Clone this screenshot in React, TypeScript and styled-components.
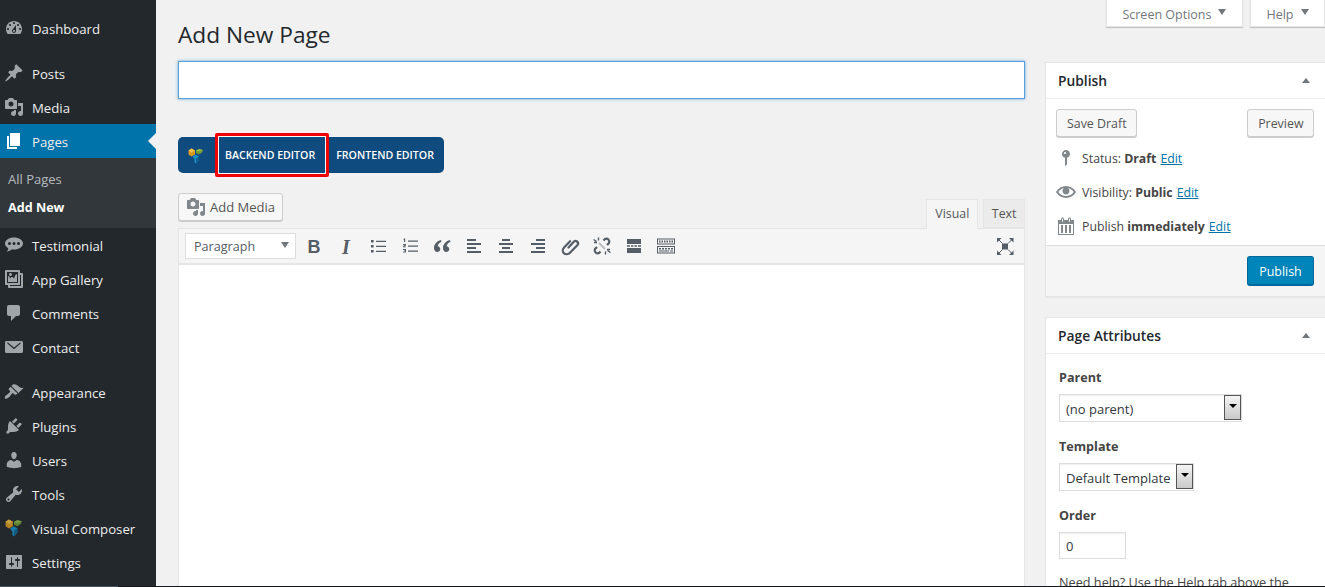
import React from "react";
import styled, { createGlobalStyle } from "styled-components";

const Global = createGlobalStyle`
  html, body { margin: 0; padding: 0; height: 100%; overflow: hidden; background: #f1f1f1; }
  body { font-family: "Open Sans", "Liberation Sans", sans-serif; font-size: 13px; color: #444; }
  * { box-sizing: border-box; }
`;

const P = {
  dashboard: "M3.76 16h12.48c1.1-1.37 1.76-3.11 1.76-5 0-4.42-3.58-8-8-8s-8 3.58-8 8c0 1.89.66 3.63 1.76 5zM10 4c.55 0 1 .45 1 1s-.45 1-1 1-1-.45-1-1 .45-1 1-1zM6 6c.55 0 1 .45 1 1s-.45 1-1 1-1-.45-1-1 .45-1 1-1zm8 0c.55 0 1 .45 1 1s-.45 1-1 1-1-.45-1-1 .45-1 1-1zm-5.37 5.55L12 7v6c0 1.1-.9 2-2 2s-2-.9-2-2c0-.57.24-1.08.63-1.45zM4 10c.55 0 1 .45 1 1s-.45 1-1 1-1-.45-1-1 .45-1 1-1zm12 0c.55 0 1 .45 1 1s-.45 1-1 1-1-.45-1-1 .45-1 1-1zm-5 3c0-.55-.45-1-1-1s-1 .45-1 1 .45 1 1 1 1-.45 1-1z",
  post: "M10.44 3.02l1.82-1.82 6.36 6.35-1.83 1.82c-1.05-.68-2.48-.57-3.41.36l-.75.75c-.92.93-1.04 2.35-.35 3.41l-1.83 1.82-2.41-2.41-2.8 2.79c-.42.42-3.38 2.71-3.8 2.29s1.86-3.39 2.28-3.81l2.79-2.79L4.1 9.36l1.83-1.82c1.05.69 2.48.57 3.4-.36l.75-.75c.93-.92 1.05-2.35.36-3.41z",
  media: "M13 11V4c0-.55-.45-1-1-1h-1.67L9 1H5L3.67 3H2c-.55 0-1 .45-1 1v7c0 .55.45 1 1 1h10c.55 0 1-.45 1-1zM7 4.5c1.38 0 2.5 1.12 2.5 2.5S8.38 9.5 7 9.5 4.5 8.38 4.5 7 5.62 4.5 7 4.5zM14 6h5v10.5c0 1.38-1.12 2.5-2.5 2.5S14 17.88 14 16.5s1.12-2.5 2.5-2.5c.17 0 .34.02.5.05V9h-3V6zm-4 8.05V13h2v3.5c0 1.38-1.12 2.5-2.5 2.5S7 17.88 7 16.5 8.12 14 9.5 14c.17 0 .34.02.5.05z",
  page: "M6 15V2h10v13H6zm-1 1h8v2H3V5h2v11z",
  testimonial: "M10 2.5c-5 0-9 2.7-9 6 0 1.9 1.3 3.6 3.4 4.7-.2 1.4-1 2.6-1.9 3.3 2.2-.1 4.2-1 5.5-2.2.6.1 1.3.2 2 .2 5 0 9-2.7 9-6s-4-6-9-6zM5.5 7a1.5 1.5 0 1 1 0 3 1.5 1.5 0 0 1 0-3zm4.5 0a1.5 1.5 0 1 1 0 3 1.5 1.5 0 0 1 0-3zm4.5 0a1.5 1.5 0 1 1 0 3 1.5 1.5 0 0 1 0-3z",
  gallery: "M16 4h1.96c.57 0 1.04.47 1.04 1.04v12.92c0 .57-.47 1.04-1.04 1.04H5.04C4.47 19 4 18.53 4 17.96V16H2.04C1.47 16 1 15.53 1 14.96V2.04C1 1.47 1.47 1 2.04 1h12.92c.57 0 1.04.47 1.04 1.04V4zM3 14h11V3H3v11zm5-8.5C8 4.67 7.33 4 6.5 4S5 4.67 5 5.5 5.67 7 6.5 7 8 6.33 8 5.5zm2 4.5s1-5 3-5v8H4V7c2 0 2 3 2 3s.33-2 2-2 2 2 2 2zm7 7V6h-1v8.96c0 .57-.47 1.04-1.04 1.04H6v1h11z",
  comments: "M5 2h9c1.1 0 2 .9 2 2v7c0 1.1-.9 2-2 2h-2l-5 5v-5H5c-1.1 0-2-.9-2-2V4c0-1.1.9-2 2-2z",
  email: "M2.5 4h15c.83 0 1.5.67 1.5 1.5v9c0 .83-.67 1.5-1.5 1.5h-15C1.67 16 1 15.33 1 14.5v-9C1 4.67 1.67 4 2.5 4zm1.7 1.7c-.5-.4-1.3.3-.8.9l6.600 5.700 6.600-5.700c.5-.6-.3-1.300-.8-.9l-5.800 4.700z",
  appearance: "M14.48 11.06L7.41 3.99l1.5-1.5c.5-.56 2.3-.47 3.51.32 1.21.8 1.43 1.28 2.91 2.1 1.18.64 2.45 1.26 4.45.85zm-.71.71L6.7 4.7 4.93 6.47c-.39.39-.39 1.02 0 1.41l1.06 1.06c.39.39.39 1.03 0 1.42-.6.6-1.43 1.11-2.21 1.69-.35.26-.7.53-1.01.84C1.43 13.23.18 15.6 1 16.43c.83.83 3.2-.42 4.52-1.77.3-.31.58-.66.84-1.01.58-.78 1.09-1.61 1.69-2.21.39-.39 1.02-.39 1.41 0l1.06 1.06c.39.39 1.02.39 1.41 0z",
  plugins: "M13.11 4.36L9.87 7.6 8 5.73l3.24-3.24c.35-.34 1.05-.2 1.56.32.52.51.66 1.21.31 1.55zm-8 1.77l.91-1.12 9.01 9.01-1.19.84c-.71.71-2.63 1.16-3.82 1.16H6.14L4.9 17.26c-.59.59-1.54.59-2.12 0-.59-.58-.59-1.53 0-2.12l1.24-1.24v-3.88c0-1.13.4-3.19 1.09-3.89zm7.26 3.97l3.24-3.24c.34-.35 1.04-.21 1.55.31.52.51.66 1.21.31 1.55l-3.24 3.25z",
  users: "M10 9.25c-2.27 0-2.73-3.44-2.73-3.44C7 4.02 7.82 2 9.97 2c2.16 0 2.98 2.02 2.71 3.81 0 0-.41 3.44-2.68 3.44zm0 2.57L12.72 10c2.39 0 4.52 2.33 4.52 4.53v2.49s-3.65 1.13-7.24 1.13c-3.65 0-7.24-1.13-7.24-1.13v-2.49c0-2.25 1.94-4.48 4.47-4.48z",
  tools: "M16.68 9.77c-1.34 1.34-3.3 1.67-4.95.99l-5.41 6.52c-.99.99-2.59.99-3.58 0s-.99-2.59 0-3.57l6.52-5.42c-.68-1.65-.35-3.61.99-4.95 1.28-1.28 3.12-1.62 4.72-1.06l-2.89 2.89 2.82 2.82 2.86-2.87c.53 1.58.18 3.39-1.08 4.65zM3.81 16.21c.4.39 1.04.39 1.43 0 .4-.4.4-1.04 0-1.43-.39-.4-1.03-.4-1.43 0-.39.39-.39 1.03 0 1.43z",
  settings: "M18 16V4c0-.55-.45-1-1-1H3c-.55 0-1 .45-1 1v12c0 .55.45 1 1 1h14c.55 0 1-.45 1-1zM8 11h1c.55 0 1 .45 1 1s-.45 1-1 1H8v1.5c0 .28-.22.5-.5.5s-.5-.22-.5-.5V13H6c-.55 0-1-.45-1-1s.45-1 1-1h1V5.5c0-.28.22-.5.5-.5s.5.22.5.5V11zm5-2h-1c-.55 0-1-.45-1-1s.45-1 1-1h1V5.5c0-.28.22-.5.5-.5s.5.22.5.5V7h1c.55 0 1 .45 1 1s-.45 1-1 1h-1v5.5c0 .28-.22.5-.5.5s-.5-.22-.5-.5V9z",
  status: "M14 6c0 1.86-1.28 3.41-3 3.86V16c0 1-2 2-2 2V9.86c-1.72-.45-3-2-3-3.86 0-2.21 1.79-4 4-4s4 1.79 4 4zM8 5c0 .55.45 1 1 1s1-.45 1-1-.45-1-1-1-1 .45-1 1z",
  eye: "M19.7 9.4C17.7 6 14 3.9 10 3.9S2.3 6 .3 9.4L0 10l.3.6c2 3.4 5.7 5.5 9.7 5.5s7.7-2.1 9.7-5.5l.3-.6-.3-.6zM10 14.1c-3.1 0-6-1.6-7.7-4.1C3.6 8 5.7 6.6 8 6.1c-.9.6-1.5 1.7-1.5 2.9 0 1.9 1.6 3.5 3.5 3.5s3.5-1.6 3.5-3.5c0-1.2-.6-2.3-1.5-2.9 2.3.5 4.4 1.9 5.7 3.9-1.7 2.5-4.6 4.1-7.7 4.1z",
  calendar: "M15 4h3v15H2V4h3V3c0-.41.15-.76.44-1.06.29-.29.65-.44 1.06-.44s.77.15 1.06.44c.29.3.44.65.44 1.06v1h4V3c0-.41.15-.76.44-1.06.29-.29.65-.44 1.06-.44s.77.15 1.06.44c.29.3.44.65.44 1.06v1zM6 3v2.5c0 .14.05.26.15.36.09.09.21.14.35.14s.26-.05.35-.14c.1-.1.15-.22.15-.36V3c0-.14-.05-.26-.15-.35-.09-.1-.21-.15-.35-.15s-.26.05-.35.15c-.1.09-.15.21-.15.35zm7 0v2.5c0 .14.05.26.14.36.1.09.22.14.36.14s.26-.05.36-.14c.09-.1.14-.22.14-.36V3c0-.14-.05-.26-.14-.35-.1-.1-.22-.15-.36-.15s-.26.05-.36.15c-.09.09-.14.21-.14.35zm4 15V8H3v10h14zM5 9h2v8H5V9zm4 0h2v8H9V9zm4 0h2v8h-2V9z",
};

const Glyph = ({ d, size = 20 }: { d: string; size?: number }) => (
  <svg width={size} height={size} viewBox="0 0 20 20" fill="currentColor" fillRule="evenodd" aria-hidden>
    <path d={d} />
  </svg>
);

const VcLogo = ({ size = 16 }: { size?: number }) => (
  <svg width={size} height={size} viewBox="0 0 16 16" aria-hidden>
    <polygon points="0.500,2.500 3.500,0.500 7,2.500 7,6.500 3.500,8.500 0.500,6.500" fill="#d99a22" />
    <polygon points="0.500,2.500 3.500,0.500 7,2.500 3.500,4.500" fill="#eec04a" />
    <polygon points="8,2.500 11,1 15,2 14,4.500 11,6.500 8,5" fill="#6f9a35" />
    <polygon points="8,2.500 11,1 15,2 11,3.500" fill="#93bb4c" />
    <polygon points="4.500,8.500 8,6.500 11,8.500 11,12 8,15.500 6.500,14 6.500,11" fill="#1a8fc6" />
    <polygon points="8,10.500 11,8.500 11,12 8,15.500" fill="#12628f" />
  </svg>
);

const Page = styled.div`
  width: 1325px;
  height: 587px;
  display: flex;
  flex-direction: column;
  overflow: hidden;
`;
const Body = styled.div`
  flex: 1;
  min-height: 0;
  display: flex;
  overflow: hidden;
`;
const BottomLine = styled.div`
  height: 1px;
  background: linear-gradient(to right, #44545e 118px, #14181c 118px);
  flex: none;
`;

const Sidebar = styled.nav`
  width: 156px;
  flex: none;
  background: #23282d;
  padding-top: 11px;
  display: flex;
  flex-direction: column;
`;
const MenuItem = styled.div<{ $current?: boolean; $gap?: number }>`
  height: 34px;
  flex: none;
  display: flex;
  align-items: center;
  gap: 8px;
  padding: 2px 0 0 4px;
  position: relative;
  margin-top: ${(p) => p.$gap ?? 0}px;
  color: #eee;
  font-size: 13.2px;
  background: ${(p) => (p.$current ? "#0073aa" : "transparent")};
  & > svg { flex: none; color: ${(p) => (p.$current ? "#fff" : "#a0a5aa")}; margin-top: -2px; }
`;
const SideLogo = styled.span`
  width: 20px;
  height: 18px;
  flex: none;
  margin-top: -3px;
  display: flex;
  justify-content: center;
  opacity: 0.8;
`;
const CurrentArrow = styled.span`
  position: absolute;
  right: 0;
  top: 9px;
  border: 8px solid transparent;
  border-right-color: #f1f1f1;
  border-left-width: 0;
`;
const Submenu = styled.div`
  background: #32373c;
  height: 70px;
  padding: 7px 0;
  flex: none;
`;
const SubItem = styled.div<{ $active?: boolean }>`
  height: 28px;
  line-height: ${(p) => (p.$active ? 30 : 28)}px;
  padding-left: 8px;
  font-size: ${(p) => (p.$active ? 12.6 : 13)}px;
  font-weight: ${(p) => (p.$active ? 700 : 400)};
  color: ${(p) => (p.$active ? "#fff" : "rgba(240,245,250,.7)")};
`;

const Main = styled.main`
  flex: 1;
  min-width: 0;
  padding-left: 22px;
  display: flex;
  flex-direction: column;
  overflow: hidden;
`;
const TopBar = styled.div`
  height: 61px;
  flex: none;
  display: flex;
  justify-content: space-between;
  align-items: flex-start;
`;
const Title = styled.h1`
  margin: 0;
  padding-top: 19px;
  font-size: 22.7px;
  line-height: 32px;
  font-weight: 400;
  color: #23282d;
`;
const MetaLinks = styled.div`
  display: flex;
  gap: 7px;
`;
const MetaTab = styled.div`
  height: 27px;
  display: flex;
  align-items: center;
  gap: 7px;
  padding: 2px 15.500px 0;
  background: #fff;
  font-size: 12.5px;
  color: #72777c;
  box-shadow: 0 1px 1px rgba(0, 0, 0, 0.18);
  border: 1px solid #e5e5e5;
  border-top: 0;
`;
const Caret = styled.span<{ $up?: boolean }>`
  width: 0;
  height: 0;
  ${(p) =>
    p.$up
      ? "border-left: 4px solid transparent; border-right: 4px solid transparent; border-bottom: 5px solid #72777c;"
      : "border-left: 4.5px solid transparent; border-right: 4.5px solid transparent; border-top: 6px solid #72777c; margin-top: -2px;"}
`;
const MetaCaret = styled(Caret)`
  margin-top: -4px;
`;
const Columns = styled.div`
  flex: 1;
  min-height: 0;
  display: flex;
  gap: 20px;
`;
const EditorCol = styled.div`
  width: 847px;
  flex: none;
  display: flex;
  flex-direction: column;
`;
const TitleInput = styled.div`
  height: 38px;
  background: #fff;
  border: 1px solid #5b9dd9;
  box-shadow: 0 0 3px rgba(60, 150, 225, 0.8);
  flex: none;
`;
const ComposerBar = styled.div`
  margin-top: 38px;
  width: 266px;
  height: 36px;
  flex: none;
  background: #0f4b7e;
  border-radius: 5px;
  display: flex;
  align-items: center;
  position: relative;
  color: #fff;
  font-size: 10.6px;
  font-weight: 600;
  svg { margin: 1px 0 0 10px; flex: none; }
`;
const ComposerLabel = styled.span<{ $left: number }>`
  margin-left: ${(p) => p.$left}px;
  white-space: nowrap;
`;
const RedFrame = styled.span`
  position: absolute;
  left: 37px;
  top: -4px;
  width: 114px;
  height: 44px;
  border: 3px solid #f00000;
  border-radius: 2px;
  box-shadow: inset 0 0 0 1px #fff;
`;
const EditorHead = styled.div`
  margin-top: 20px;
  height: 35px;
  flex: none;
  display: flex;
  justify-content: space-between;
  align-items: flex-start;
`;
const Button = styled.div`
  height: 28px;
  background: #f7f7f7;
  border: 1px solid #ccc;
  border-radius: 3px;
  box-shadow: 0 1px 0 #ccc;
  color: #555;
  display: inline-flex;
  align-items: center;
  font-size: 13px;
  white-space: nowrap;
`;
const AddMedia = styled(Button)`
  width: 105px;
  padding-left: 7px;
  gap: 4px;
  svg { color: #82878c; }
`;
const Tabs = styled.div`
  display: flex;
  gap: 5px;
  align-self: flex-end;
`;
const Tab = styled.div<{ $active?: boolean }>`
  height: ${(p) => (p.$active ? 30 : 29)}px;
  margin-bottom: ${(p) => (p.$active ? -1 : 0)}px;
  position: relative;
  padding: 0 ${(p) => (p.$active ? 8 : 7.5)}px ${(p) => (p.$active ? 2 : 1)}px;
  display: flex;
  align-items: center;
  font-size: 12.4px;
  color: #555;
  background: ${(p) => (p.$active ? "#f5f5f5" : "#ebebeb")};
  border: 1px solid #e5e5e5;
  border-bottom: ${(p) => (p.$active ? "0" : "1px solid #e5e5e5")};
`;
const Toolbar = styled.div`
  height: 37px;
  flex: none;
  background: #f5f5f5;
  border: 1px solid #e5e5e5;
  border-bottom: 2px solid #e5e5e5;
  display: flex;
  align-items: center;
  padding-left: 6px;
  color: #50575e;
`;
const FormatSelect = styled.div`
  width: 111px;
  height: 26px;
  background: #fff;
  border: 1px solid #ddd;
  display: flex;
  align-items: center;
  justify-content: space-between;
  padding: 0 6px 0 8px;
  margin-right: 2px;
  font-size: 12.6px;
  color: #555d66;
`;
const ToolBtn = styled.div`
  width: 32px;
  height: 26px;
  flex: none;
  display: flex;
  align-items: center;
  justify-content: center;
  color: #555d66;
`;
const BoldMark = styled.b`
  font-family: "Liberation Sans", sans-serif;
  font-size: 18px;
  line-height: 26px;
  font-weight: 700;
  padding-top: 1px;
`;
const ItalicMark = styled.i`
  font-family: "Liberation Serif", serif;
  font-size: 20px;
  line-height: 26px;
  font-weight: 700;
  font-style: italic;
  padding-top: 1px;
`;
const FullscreenBtn = styled(ToolBtn)`
  margin-left: auto;
  margin-right: 3px;
`;
const EditorArea = styled.div`
  flex: 1;
  background: #fff;
  border-left: 1px solid #e5e5e5;
  border-right: 1px solid #e5e5e5;
`;

const SideCol = styled.aside`
  width: 280px;
  flex: none;
  padding-top: 1px;
  display: flex;
  flex-direction: column;
  gap: 20px;
`;
const Box = styled.section`
  background: #fff;
  border: 1px solid #e5e5e5;
  border-right: 0;
  box-shadow: 0 1px 1px rgba(0, 0, 0, 0.04);
`;
const BoxHead = styled.div`
  height: 36px;
  display: flex;
  align-items: center;
  justify-content: space-between;
  padding: 0 15px 0 12px;
  border-bottom: 1px solid #eee;
  font-size: 13.8px;
  font-weight: 600;
  color: #23282d;
`;
const PublishActions = styled.div`
  display: flex;
  justify-content: space-between;
  padding: 10px 11px 0 10px;
`;
const GhostButton = styled(Button)`
  padding: 0 9.500px 0 10px;
  font-size: 12.4px;
`;
const InfoRows = styled.div`
  padding-top: 4px;
  display: flex;
  flex-direction: column;
`;
const InfoRow = styled.div`
  height: 34px;
  display: flex;
  align-items: center;
  padding-left: 10px;
  color: #444;
  font-size: 12.3px;
  white-space: pre;
  svg { color: #82878c; flex: none; margin-right: 6px; }
  b { font-weight: 700; }
`;
const EditLink = styled.a`
  color: #0073aa;
  text-decoration: underline;
  margin-left: 4px;
`;
const BoxFoot = styled.div`
  margin-top: 2px;
  height: 51px;
  background: #f5f5f5;
  border-top: 1px solid #ddd;
  display: flex;
  align-items: flex-start;
  justify-content: flex-end;
  padding: 10px 11px 0 0;
`;
const PrimaryButton = styled.div`
  width: 67px;
  height: 30px;
  padding-top: 1px;
  background: #0085ba;
  border: 1px solid #006799;
  border-bottom-width: 2px;
  border-radius: 3px;
  color: #fff;
  font-size: 12.4px;
  display: flex;
  align-items: center;
  justify-content: center;
`;
const AttrBody = styled.div`
  padding: 13px 13px 0;
  height: 240px;
  overflow: hidden;
`;
const FieldLabel = styled.div`
  font-size: 12.6px;
  font-weight: 700;
  height: 20px;
  line-height: 22px;
  color: #444;
`;
const NativeSelect = styled.div<{ $w: number }>`
  width: ${(p) => p.$w}px;
  height: 28px;
  margin: 7px 0 14px;
  background: #fff;
  border: 1px solid #ddd;
  box-shadow: inset 0 1px 2px rgba(0, 0, 0, 0.07);
  display: flex;
  align-items: stretch;
  justify-content: space-between;
  font-size: 13px;
  color: #32373c;
  padding-left: 6px;
  line-height: 29px;
  white-space: nowrap;
`;
const SelectArrow = styled.span`
  width: 17px;
  margin: 0 0 1px 0;
  border: 1px solid #555;
  background: linear-gradient(#f4f4f4, #c9c9c9);
  display: flex;
  align-items: center;
  justify-content: center;
  &::after {
    content: "";
    border-left: 4px solid transparent;
    border-right: 4px solid transparent;
    border-top: 4px solid #000;
    margin-top: -4px;
  }
`;
const OrderInput = styled.div`
  width: 67px;
  height: 27px;
  margin: 7px 0 0;
  background: #fff;
  border: 1px solid #ddd;
  box-shadow: inset 0 1px 2px rgba(0, 0, 0, 0.07);
  padding-left: 6px;
  line-height: 26px;
  font-size: 13px;
  color: #32373c;
`;
const HelpNote = styled.p`
  margin: 14px 0 0;
  font-size: 12.7px;
  line-height: 19px;
  white-space: nowrap;
  color: #444;
`;

const bar = (y: number, x1: number, x2: number) => `M${x1} ${y}h${x2 - x1}v2H${x1}z`;
const ICONS: Record<string, string> = {
  bullist: "M3 4h2.600v2.600H3zM3 9h2.600v2.600H3zM3 14h2.600v2.600H3zM8 4.800h10v1.200H8zM8 9.800h10v1.200H8zM8 14.800h10v1.200H8z",
  numlist: "M4 2.500h1.200v3.600H4V3.500H3zM8 4.500h10v1.200H8zM8 9.500h10v1.200H8zM8 14.500h10v1.200H8zM3 8h3v1.200L4.400 10.400H6v.9H3v-1l1.600-1.300H3zM3 13h3v3.600H3v-.9h2v-.5H3.800v-.7H5v-.5H3z",
  quote: "M9 4C5 5 2 8 2 12c0 2.200 1.300 4 3.300 4 1.700 0 3-1.200 3-2.900 0-1.600-1.100-2.800-2.700-2.900C6 8.300 7.500 6.700 9.500 5.800zM18 4c-4 1-7 4-7 8 0 2.200 1.300 4 3.300 4 1.700 0 3-1.200 3-2.900 0-1.600-1.100-2.800-2.700-2.900.4-1.900 1.900-3.500 3.900-4.400z",
  alignleft: bar(3, 3, 12) + bar(7, 3, 17) + bar(11, 3, 12) + bar(15, 3, 17),
  aligncenter: bar(3, 6, 14) + bar(7, 3, 17) + bar(11, 6, 14) + bar(15, 3, 17),
  alignright: bar(3, 8, 17) + bar(7, 3, 17) + bar(11, 8, 17) + bar(15, 3, 17),
  hr: "M3 3h14v5H3zM3 9.300h3v1.400H3zM7 9.300h2.500v1.400H7zM10.500 9.300H13v1.400h-2.500zM14 9.300h3v1.400h-3zM3 12h14v5H3z",
  kitchen: "M1 2.500h18v6H1zM2 3.500v4h16v-4zM3 4.500h1.500V6.500H3zM5.500 4.500H7V6.500H5.500zM8 4.500h1.500V6.500H8zM10.500 4.500H12V6.500h-1.500zM13 4.500h1.500V6.500H13zM15.500 4.500H17V6.500h-1.500zM1 10h18v7.500H1zM2 11v5.500h16V11zM3 12h2v1.500H3zM6 12h2v1.500H6zM9 12h2v1.500H9zM12 12h2v1.500h-2zM15 12h2v1.500h-2zM3 14.500h10V15.500H3zM14 14.500h3V15.500h-3z",
};

const LinkIcon = () => (
  <svg width="20" height="20" viewBox="0 0 20 20" fill="none" stroke="currentColor" strokeWidth="2.200" aria-hidden>
    <path d="M8.500 11.500l5-5.500a2.500 2.500 0 0 1 4 3l-7.500 7.700c-1.700 1.700-4.500 2-6.200.4-1.500-1.500-1.300-4 .3-5.700l6-6.200" strokeLinecap="round" />
  </svg>
);
const UnlinkIcon = () => (
  <svg width="20" height="20" viewBox="0 0 20 20" fill="none" stroke="currentColor" strokeWidth="2.200" aria-hidden>
    <path d="M11.500 4.500l1.500-1.500a3 3 0 0 1 4 4l-2 2M8.500 15.500L7 17a3 3 0 0 1-4-4l2-2" />
    <path d="M2 6.500h3M6.500 1.500v3M1.500 3.500l3 2M18 13.500h-3M13.500 18.500v-3M18.500 16.500l-3-2" strokeWidth="1.400" />
    <path d="M7 7l6 6" stroke="#b9bcc0" strokeWidth="1.800" />
  </svg>
);
const FullscreenIcon = () => (
  <svg width="20" height="20" viewBox="0 0 20 20" fill="currentColor" stroke="none" aria-hidden>
    <rect x="7" y="7.500" width="6" height="6" />
    <path d="M2 2h4.500L2 6.500zM18.500 2v4.500L14 2zM2 19v-4.500L6.500 19zM18.500 19H14l4.500-4.500z" />
    <path d="M4 4l3.500 3.500M16.500 4L13 7.500M4 17l3.500-3.500M16.500 17L13 13.500" stroke="currentColor" strokeWidth="1" />
  </svg>
);

const menuTop = [
  { name: "Testimonial", d: P.testimonial },
  { name: "App Gallery", d: P.gallery },
  { name: "Comments", d: P.comments },
  { name: "Contact", d: P.email },
];
const menuBottom = [
  { name: "Appearance", d: P.appearance, gap: 11 },
  { name: "Plugins", d: P.plugins },
  { name: "Users", d: P.users },
  { name: "Tools", d: P.tools },
  { name: "Visual Composer", vc: true },
  { name: "Settings", d: P.settings },
];

export default function App() {
  return (
    <Page>
      <Global />
      <Body>
        <Sidebar>
          <MenuItem><Glyph d={P.dashboard} />Dashboard</MenuItem>
          <MenuItem $gap={11}><Glyph d={P.post} />Posts</MenuItem>
          <MenuItem><Glyph d={P.media} />Media</MenuItem>
          <MenuItem $current><Glyph d={P.page} />Pages<CurrentArrow /></MenuItem>
          <Submenu>
            <SubItem>All Pages</SubItem>
            <SubItem $active>Add New</SubItem>
          </Submenu>
          {menuTop.map((m) => (
            <MenuItem key={m.name}><Glyph d={m.d} />{m.name}</MenuItem>
          ))}
          {menuBottom.map((m) => (
            <MenuItem key={m.name} $gap={m.gap}>
              {m.vc ? <SideLogo><VcLogo size={18} /></SideLogo> : <Glyph d={m.d as string} />}
              {m.name}
            </MenuItem>
          ))}
        </Sidebar>
        <Main>
          <TopBar>
            <Title>Add New Page</Title>
            <MetaLinks>
              <MetaTab>Screen Options<MetaCaret /></MetaTab>
              <MetaTab>Help<MetaCaret /></MetaTab>
            </MetaLinks>
          </TopBar>
          <Columns>
            <EditorCol>
              <TitleInput />
              <ComposerBar>
                <VcLogo />
                <ComposerLabel $left={21}>BACKEND EDITOR</ComposerLabel>
                <ComposerLabel $left={21}>FRONTEND EDITOR</ComposerLabel>
                <RedFrame />
              </ComposerBar>
              <EditorHead>
                <AddMedia><Glyph d={P.media} size={20} />Add Media</AddMedia>
                <Tabs>
                  <Tab $active>Visual</Tab>
                  <Tab>Text</Tab>
                </Tabs>
              </EditorHead>
              <Toolbar>
                <FormatSelect>Paragraph<Caret /></FormatSelect>
                <ToolBtn><BoldMark>B</BoldMark></ToolBtn>
                <ToolBtn><ItalicMark>I</ItalicMark></ToolBtn>
                <ToolBtn><Glyph d={ICONS.bullist} /></ToolBtn>
                <ToolBtn><Glyph d={ICONS.numlist} /></ToolBtn>
                <ToolBtn><Glyph d={ICONS.quote} /></ToolBtn>
                <ToolBtn><Glyph d={ICONS.alignleft} /></ToolBtn>
                <ToolBtn><Glyph d={ICONS.aligncenter} /></ToolBtn>
                <ToolBtn><Glyph d={ICONS.alignright} /></ToolBtn>
                <ToolBtn><LinkIcon /></ToolBtn>
                <ToolBtn><UnlinkIcon /></ToolBtn>
                <ToolBtn><Glyph d={ICONS.hr} /></ToolBtn>
                <ToolBtn><Glyph d={ICONS.kitchen} /></ToolBtn>
                <FullscreenBtn><FullscreenIcon /></FullscreenBtn>
              </Toolbar>
              <EditorArea />
            </EditorCol>
            <SideCol>
              <Box>
                <BoxHead>Publish<Caret $up /></BoxHead>
                <PublishActions>
                  <GhostButton>Save Draft</GhostButton>
                  <GhostButton>Preview</GhostButton>
                </PublishActions>
                <InfoRows>
                  <InfoRow><Glyph d={P.status} />Status: <b>Draft</b><EditLink>Edit</EditLink></InfoRow>
                  <InfoRow><Glyph d={P.eye} />Visibility: <b>Public</b><EditLink>Edit</EditLink></InfoRow>
                  <InfoRow><Glyph d={P.calendar} />Publish <b>immediately</b><EditLink>Edit</EditLink></InfoRow>
                </InfoRows>
                <BoxFoot><PrimaryButton>Publish</PrimaryButton></BoxFoot>
              </Box>
              <Box>
                <BoxHead>Page Attributes<Caret $up /></BoxHead>
                <AttrBody>
                  <FieldLabel>Parent</FieldLabel>
                  <NativeSelect $w={183}>(no parent)<SelectArrow /></NativeSelect>
                  <FieldLabel>Template</FieldLabel>
                  <NativeSelect $w={135}>Default Template<SelectArrow /></NativeSelect>
                  <FieldLabel>Order</FieldLabel>
                  <OrderInput>0</OrderInput>
                  <HelpNote>Need help? Use the Help tab above the</HelpNote>
                </AttrBody>
              </Box>
            </SideCol>
          </Columns>
        </Main>
      </Body>
      <BottomLine />
    </Page>
  );
}
